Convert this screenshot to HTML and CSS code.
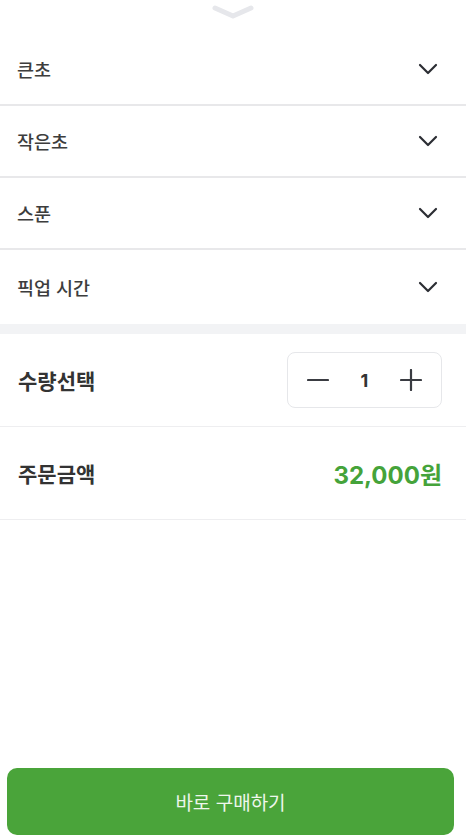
FILE: index.html
```html
<!DOCTYPE html>
<html lang="ko">
<head>
<meta charset="utf-8">
<link rel="stylesheet" href="styles.css">
</head>
<body>
<div class="page">
  <div class="handle">
    <svg width="42" height="14" viewBox="0 0 42 14"><path d="M3 3 L21 11 L39 3" fill="none" stroke="#e6e7eb" stroke-width="5" stroke-linecap="round" stroke-linejoin="round"/></svg>
  </div>
  <div class="option"><span>큰초</span><svg class="chev" width="20" height="12" viewBox="0 0 20 12"><path d="M2 2 L10 10 L18 2" fill="none" stroke="#2b2d33" stroke-width="2.2" stroke-linecap="round" stroke-linejoin="round"/></svg></div>
  <div class="option"><span>작은초</span><svg class="chev" width="20" height="12" viewBox="0 0 20 12"><path d="M2 2 L10 10 L18 2" fill="none" stroke="#2b2d33" stroke-width="2.2" stroke-linecap="round" stroke-linejoin="round"/></svg></div>
  <div class="option"><span>스푼</span><svg class="chev" width="20" height="12" viewBox="0 0 20 12"><path d="M2 2 L10 10 L18 2" fill="none" stroke="#2b2d33" stroke-width="2.2" stroke-linecap="round" stroke-linejoin="round"/></svg></div>
  <div class="option last"><span>픽업 시간</span><svg class="chev" width="20" height="12" viewBox="0 0 20 12"><path d="M2 2 L10 10 L18 2" fill="none" stroke="#2b2d33" stroke-width="2.2" stroke-linecap="round" stroke-linejoin="round"/></svg></div>
  <div class="band"></div>
  <div class="row">
    <span class="label">수량선택</span>
    <div class="stepper">
      <svg width="22" height="22" viewBox="0 0 22 22"><path d="M1 11 H21" stroke="#3a3c42" stroke-width="2.2" stroke-linecap="round"/></svg>
      <span class="qty">1</span>
      <svg width="22" height="22" viewBox="0 0 22 22"><path d="M1 11 H21 M11 1 V21" stroke="#3a3c42" stroke-width="2.2" stroke-linecap="round"/></svg>
    </div>
  </div>
  <div class="row">
    <span class="label">주문금액</span>
    <span class="price">32,000원</span>
  </div>
  <div class="spacer"></div>
  <button class="buy">바로 구매하기</button>
</div>
</body>
</html>
```
FILE: styles.css
```css
* { box-sizing: border-box; }
html, body { margin: 0; padding: 0; background: #fff; }
body { font-family: "Inter", "Noto Sans CJK KR", "Noto Sans", sans-serif; color: #333; }
.page { display: flex; flex-direction: column; height: 840px; }
.handle { height: 34px; display: flex; justify-content: center; padding-top: 5px; }
.option {
  height: 72px;
  border-bottom: 2px solid #e8e8ea;
  display: flex;
  align-items: center;
  justify-content: space-between;
  padding: 0 28px 0 17px;
  font-size: 18.5px;
  font-weight: 500;
  color: #3d3d3d;
}
.option.last { border-bottom: none; height: 74px; }
.chev { display: block; }
.band { height: 10px; background: #f2f3f5; }
.row {
  height: 93px;
  border-bottom: 1px solid #eeeef0;
  display: flex;
  align-items: center;
  justify-content: space-between;
  padding: 0 24px 0 18px;
}
.label { font-size: 21px; font-weight: 700; color: #333; }
.stepper {
  width: 155px;
  height: 56px;
  border: 1px solid #e6e7ea;
  border-radius: 8px;
  display: flex;
  align-items: center;
  justify-content: space-between;
  padding: 0 19px 0 19px;
}
.stepper svg { display: block; }
.qty { font-size: 18px; font-weight: 700; color: #333; }
.price { font-size: 24px; font-weight: 700; color: #45a33a; }
.spacer { flex: 1; }
.buy {
  margin: 0 12px 5px 7px;
  height: 67px;
  border: none;
  border-radius: 10px;
  background: #4aa43a;
  color: #eef6ec;
  font-family: "Noto Sans CJK KR", "Noto Sans", sans-serif;
  font-size: 19px;
  font-weight: 400;
}
```
